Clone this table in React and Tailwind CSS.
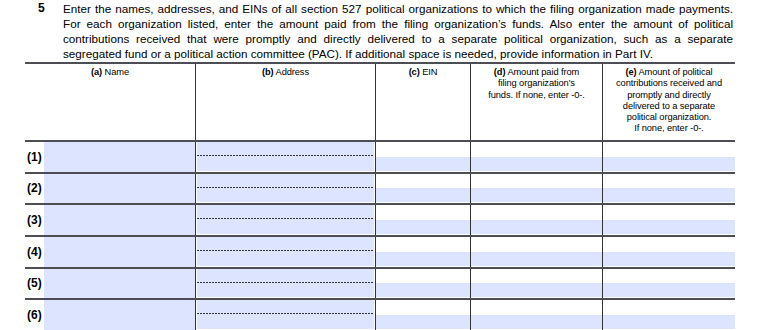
import React from "react";

const rows = [
  { n: "(1)", h: "h-[32px]" },
  { n: "(2)", h: "h-[31px]" },
  { n: "(3)", h: "h-[32px]" },
  { n: "(4)", h: "h-[32px]" },
  { n: "(5)", h: "h-[31px]" },
  { n: "(6)", h: "h-[32px]" },
];

function Row({ n, h }) {
  return (
    <div className={`flex ${h} border-b-2 border-[#4d4d55]`}>
      <div className="w-[19px] flex items-center pl-[2px] pb-[1px] text-[12px] font-bold text-black">{n}</div>
      <div className="w-[151px] bg-[#dde4ff]" />
      <div className="w-[180px] border-l border-[#333] bg-white px-[1px] pb-[1px]">
        <div className="h-full bg-[#dde4ff] flex flex-col">
          <div className="h-[13px]" />
          <div className="h-[1px] bg-[repeating-linear-gradient(90deg,#333_0px,#333_2px,transparent_2px,transparent_3px)]" />
        </div>
      </div>
      <div className="w-[95px] border-l border-[#333] flex flex-col justify-end pb-[1px]">
        <div className="h-[14px] bg-[#dde4ff]" />
      </div>
      <div className="w-[132px] border-l border-[#333] flex flex-col justify-end pb-[1px]">
        <div className="h-[14px] bg-[#dde4ff]" />
      </div>
      <div className="w-[133px] border-l border-[#333] flex flex-col justify-end pb-[1px]">
        <div className="h-[14px] bg-[#dde4ff]" />
      </div>
    </div>
  );
}

export default function App() {
  const hdr = "text-[9.3px] leading-[11.3px] text-center text-black pt-[3px] tracking-[-0.1px]";
  return (
    <div className="w-[760px] h-[330px] bg-white overflow-hidden font-['Liberation_Sans',Arial,sans-serif] text-black">
      <div className="h-[62px] pt-[1px] flex">
        <div className="w-[63px] pl-[38px] text-[12px] leading-[15px] font-bold">5</div>
        <div className="w-[670px] text-[11.7px] leading-[15px]">
          <div className="text-justify [text-align-last:justify]">Enter the names, addresses, and EINs of all section 527 political organizations to which the filing organization made payments.</div>
          <div className="text-justify [text-align-last:justify]">For each organization listed, enter the amount paid from the filing organization’s funds. Also enter the amount of political</div>
          <div className="text-justify [text-align-last:justify]">contributions received that were promptly and directly delivered to a separate political organization, such as a separate</div>
          <div>segregated fund or a political action committee (PAC). If additional space is needed, provide information in Part IV.</div>
        </div>
      </div>
      <div className="ml-[25px] w-[710px]">
        <div className="flex h-[80px] border-t-2 border-b-2 border-[#4d4d55]">
          <div className={`w-[170px] ${hdr}`}><b>(a)</b> Name</div>
          <div className={`w-[180px] border-l border-[#333] ${hdr}`}><b>(b)</b> Address</div>
          <div className={`w-[95px] border-l border-[#333] ${hdr}`}><b>(c)</b> EIN</div>
          <div className={`w-[132px] border-l border-[#333] ${hdr}`}>
            <b>(d)</b> Amount paid from<br />filing organization’s<br />funds. If none, enter -0-.
          </div>
          <div className={`w-[133px] border-l border-[#333] ${hdr}`}>
            <b>(e)</b> Amount of political<br />contributions received and<br />promptly and directly<br />delivered to a separate<br />political organization.<br />If none, enter -0-.
          </div>
        </div>
        {rows.map((r) => (
          <Row key={r.n} {...r} />
        ))}
      </div>
    </div>
  );
}
